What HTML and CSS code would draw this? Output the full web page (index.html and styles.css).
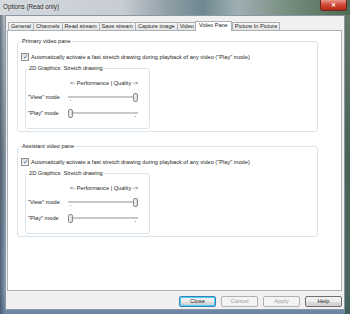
FILE: index.html
```html
<!DOCTYPE html>
<html lang="en">
  <head>
    <meta charset="UTF-8" />
    <title>Options (Read only)</title>
    <link rel="stylesheet" href="styles.css">
  </head>
  <body>
    <div class="window">
      <div class="titlebar">
        <span class="title">Options (Read only)</span>
        <span class="close">&#x2715;</span>
      </div>
      <div class="client">
        <div class="tabs">
          <span class="tab">General</span>
          <span class="tab">Channels</span>
          <span class="tab">Read stream</span>
          <span class="tab">Save stream</span>
          <span class="tab">Capture image</span>
          <span class="tab">Video</span>
          <span class="tab active">Video Pane</span>
          <span class="tab">Picture In Picture</span>
        </div>
        <div class="panel">
          <fieldset class="group">
            <legend>Primary video pane</legend>
            <label class="check"><span class="box">&#x2713;</span>Automatically activate a fast stretch drawing during playback of any video ("Play" mode)</label>
            <fieldset class="inner">
              <legend>2D Graphics: Stretch drawing</legend>
              <div class="scale">&lt;- Performance | Quality -&gt;</div>
              <div class="row">
                <span class="lbl">"View" mode</span>
                <div class="slider"><span class="thumb right"></span></div>
              </div>
              <div class="row">
                <span class="lbl">"Play" mode</span>
                <div class="slider"><span class="thumb"></span></div>
              </div>
            </fieldset>
          </fieldset>
          <fieldset class="group">
            <legend>Assistant video pane</legend>
            <label class="check"><span class="box">&#x2713;</span>Automatically activate a fast stretch drawing during playback of any video ("Play" mode)</label>
            <fieldset class="inner">
              <legend>2D Graphics: Stretch drawing</legend>
              <div class="scale">&lt;- Performance | Quality -&gt;</div>
              <div class="row">
                <span class="lbl">"View" mode</span>
                <div class="slider"><span class="thumb right"></span></div>
              </div>
              <div class="row">
                <span class="lbl">"Play" mode</span>
                <div class="slider"><span class="thumb"></span></div>
              </div>
            </fieldset>
          </fieldset>
        </div>
        <div class="buttons">
          <button class="btn default">Close</button>
          <button class="btn" disabled>Cancel</button>
          <button class="btn" disabled>Apply</button>
          <button class="btn">Help</button>
        </div>
      </div>
    </div>
  </body>
</html>
```

FILE: styles.css
```css
body {
  margin: 0;
  font-family: "Liberation Sans", Arial, sans-serif;
  font-size: 5.65px;
  line-height: 8px;
  color: #1e1e1e;
  overflow: hidden;
}
.window {
  width: 350px;
  height: 314px;
  box-sizing: border-box;
  padding: 0 5px 4px 5px;
  display: flex;
  flex-direction: column;
  background:
    linear-gradient(90deg, rgba(50, 62, 78, 0.6) 0px, rgba(60, 75, 90, 0) 5px, rgba(0, 0, 0, 0) 345px, rgba(40, 70, 40, 0.6) 345px),
    linear-gradient(180deg, #c9d0d6 0px, #aab6bf 40px, #7f8f9c 160px, #7e97b3 290px, #6a86a6 314px);
}
.titlebar {
  height: 15px;
  display: flex;
  align-items: flex-start;
  margin: 0 -5px;
  padding: 0 3px;
  background: linear-gradient(90deg, #d4d9de 0%, #c7cdd2 35%, #8e9ea6 48%, #6f8890 58%, #9fb0b4 68%, #7d9286 80%, #5f7a66 92%, #4d6b55 100%);
}
.title {
  padding-top: 3px;
  font-size: 6.3px;
  color: #202020;
  text-shadow: 0 0 3px #fff;
}
.close {
  margin-left: auto;
  width: 25px;
  height: 10px;
  border-radius: 0 0 3px 3px;
  background: linear-gradient(#e8978c, #cd4632 50%, #b52b18);
  border: 1px solid #6b2a20;
  border-top: none;
  color: #fff;
  font-size: 6px;
  line-height: 10px;
  text-align: center;
  font-weight: bold;
}
.client {
  flex: 1;
  background-color: #f0f0f0;
  border: 1px solid #8a96a2;
  display: flex;
  flex-direction: column;
  padding: 5px 2px 0 1px;
}
.tabs {
  display: flex;
  padding-left: 1px;
  height: 9px;
  align-items: flex-end;
}
.tab {
  height: 7px;
  line-height: 7px;
  padding: 0 2px;
  font-size: 5.6px;
  border: 1px solid #a9b0b7;
  border-bottom: none;
  margin-right: -1px;
  background: linear-gradient(#f6f6f6, #e4e4e4);
  white-space: nowrap;
}
.tab.active {
  height: 9px;
  background: #fff;
  position: relative;
  z-index: 1;
  margin: 0 0 -1px -1px;
  padding: 0 3px;
}
.panel {
  height: 259px;
  background-color: #fff;
  border: 1px solid #aab1b8;
  padding: 0 23px 0 9px;
}
.group {
  margin: 6px 0 0 0;
  padding: 8px 0 0 3px;
  min-width: 0;
  height: 95px;
  box-sizing: border-box;
  border: 1px solid #dbe4ea;
  border-radius: 3px;
}
.group + .group {
  margin-top: 10px;
}
.group legend,
.inner legend {
  padding: 0 1px;
  line-height: 8px;
}
.check {
  display: flex;
  align-items: center;
  gap: 2px;
  white-space: nowrap;
}
.box {
  width: 6px;
  height: 6px;
  border: 1px solid #8f8f8f;
  background: linear-gradient(#dcdcdc, #fafafa);
  color: #2a4a8a;
  font-size: 6px;
  line-height: 6px;
  text-align: center;
}
.inner {
  margin: 3px 0 0 4px;
  padding: 7px 0 0 2px;
  width: 125px;
  height: 65px;
  box-sizing: border-box;
  border: 1px solid #dbe4ea;
  border-radius: 3px;
}
.scale {
  padding-left: 40px;
  width: 72px;
  text-align: center;
  white-space: nowrap;
}
.row {
  display: flex;
  align-items: center;
  height: 8px;
  margin-top: 6px;
}
.row + .row {
  margin-top: 8px;
}
.lbl {
  width: 40px;
  white-space: nowrap;
}
.slider {
  position: relative;
  width: 70px;
  height: 8px;
  background:
    linear-gradient(#c8c8c8, #c8c8c8) 0 3px / 100% 2px no-repeat,
    linear-gradient(#a0a0a0, #a0a0a0) 2px 7px / 1px 2px no-repeat,
    linear-gradient(#a0a0a0, #a0a0a0) 67px 7px / 1px 2px no-repeat;
}
.thumb {
  position: absolute;
  left: 0;
  top: 0;
  width: 3px;
  height: 7px;
  border: 1px solid #8a8a8a;
  border-radius: 2px;
  background: linear-gradient(90deg, #f4f4f4, #d8d8d8);
}
.thumb.right {
  left: 65px;
}
.buttons {
  display: flex;
  justify-content: flex-end;
  gap: 5px;
  padding: 5px 0 0 0;
}
.btn {
  width: 37px;
  height: 11px;
  padding: 0;
  font-family: "Liberation Sans", Arial, sans-serif;
  font-size: 5.8px;
  line-height: 9px;
  color: #1e1e1e;
  border: 1px solid #707070;
  border-radius: 2px;
  background: linear-gradient(#f2f2f2 0%, #ebebeb 50%, #dddddd 51%, #cfcfcf 100%);
}
.btn.default {
  border-color: #3c7fb1;
  box-shadow: inset 0 0 0 1px #48d0f8;
}
.btn:disabled {
  color: #a0a0a0;
  border-color: #adb2b5;
  background: #f4f4f4;
}
```
